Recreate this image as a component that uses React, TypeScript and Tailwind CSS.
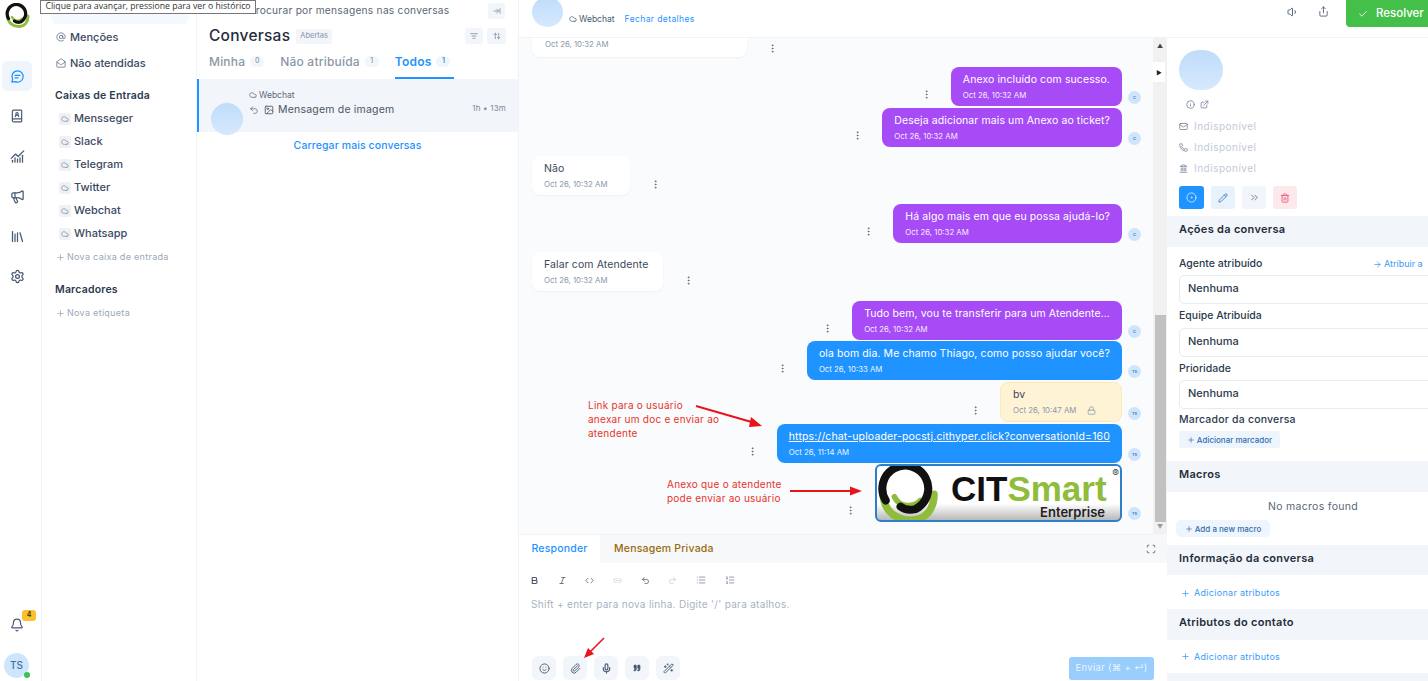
import {
  ArrowRight, ArrowUpDown, AtSign, Bell, Bold, BookUser, ChartNoAxesCombined, Check, ChevronsRight, CircleDot, Cloud,
  Code, EllipsisVertical, Image, Info, Italic, Landmark, Library, Link2, List, ListFilter, ListOrdered, Lock, Mail,
  MailOpen, Megaphone, Mic, Paperclip, Pencil, Phone, Plus, Quote, Redo2, Scan, Settings, Share,
  ExternalLink, Smile, Trash2, Undo2, Volume1, WandSparkles, ArrowRightToLine,
} from 'lucide-react';
import type { ReactNode } from 'react';

const inboxes = ['Mensseger', 'Slack', 'Telegram', 'Twitter', 'Webchat', 'Whatsapp'];

function Logo({ size }: { size: number }) {
  return (
    <svg width={size} height={size} viewBox="0 0 50 50" fill="none" className="shrink-0">
      <path d="M5 27C6 40 16 47 27 47C40 47 46 37 46 26" stroke="#8fbc3a" strokeWidth="6" strokeLinecap="round" />
      <path d="M14 28C18 37 29 37 35 31" stroke="#8fbc3a" strokeWidth="4.5" strokeLinecap="round" />
      <path d="M7 31A18.5 18.5 0 1 1 31 38C27 39 23 39 19 36" stroke="#111" strokeWidth="6.5" strokeLinecap="round" />
    </svg>
  );
}

function ChatIcon() {
  return (
    <svg width="15" height="15" viewBox="0 0 24 24" fill="none" stroke="#1f93ff" strokeWidth="2" strokeLinecap="round" strokeLinejoin="round">
      <path d="M12 3a9 9 0 1 1-3.6 17.2L3 21l1.2-4.6A9 9 0 0 1 12 3z" />
      <path d="M8 10h8M8 14h5" />
    </svg>
  );
}

function NavIcon({ children, active }: { children: ReactNode; active?: boolean }) {
  return (
    <div className={`flex h-[30px] w-[30px] items-center justify-center rounded-md text-[#4a5a72] ${active ? 'bg-[#eef5fd]' : ''}`}>
      {children}
    </div>
  );
}

function SectionHeader({ title, className }: { title: string; className: string }) {
  return (
    <div className={`flex shrink-0 items-center bg-[#f2f5f9] pb-[4px] pl-[12px] text-[11px] font-semibold tracking-[0.3px] text-[#1f2d3d] ${className}`}>
      {title}
    </div>
  );
}

function SelectBox() {
  return (
    <div className="flex h-[29px] w-[300px] items-center rounded-[5px] border border-[#e6ebf0] bg-white pb-[2px] pl-[8px] text-[11px] font-medium text-[#2c3a4d]">
      Nenhuma
    </div>
  );
}

function Kebab({ className }: { className: string }) {
  return <EllipsisVertical size={11} strokeWidth={2} className={`shrink-0 text-[#5b6b80] ${className}`} />;
}

function Mini({ label }: { label: string }) {
  return (
    <div className="mb-[2px] ml-[6px] flex h-[13px] w-[13px] shrink-0 items-center justify-center rounded-full bg-[#cfe5fb] text-[4px] font-semibold text-[#3b82c4]">
      {label}
    </div>
  );
}

function Outgoing({
  text, time, tone, mt, mini = 'C',
}: { text: string; time: string; tone: string; mt: string; mini?: string }) {
  return (
    <div className={`flex items-end justify-end ${mt}`}>
      <Kebab className="mb-[6px] mr-[19px]" />
      <div className={`flex h-[39px] flex-col justify-center rounded-[8px] px-[12px] text-white ${tone}`}>
        <p className="text-[10.5px] leading-[14px] tracking-[0.1px]">{text}</p>
        <p className="mt-[3px] text-[7.8px] leading-[11px] opacity-90">{time}</p>
      </div>
      <Mini label={mini} />
    </div>
  );
}

function Incoming({ text, mt, width }: { text: string; mt: string; width: string }) {
  return (
    <div className={`flex items-end ${mt}`}>
      <div className={`flex h-[39px] flex-col justify-center rounded-[8px] bg-white pl-[12px] shadow-[0_1px_2px_rgba(30,50,80,0.05)] ${width}`}>
        <p className="text-[10.5px] leading-[14px] tracking-[0.1px] text-[#3c4858]">{text}</p>
        <p className="mt-[3px] text-[7.8px] leading-[11px] text-[#8a97a8]">Oct 26, 10:32 AM</p>
      </div>
      <Kebab className="mb-[5px] ml-[20px]" />
    </div>
  );
}

function ComposerButton({ children }: { children: ReactNode }) {
  return <div className="flex h-[24px] w-[24px] items-center justify-center rounded-md bg-[#f2f5f9] text-[#4a5a72]">{children}</div>;
}

function Unavailable({ icon }: { icon: ReactNode }) {
  return (
    <div className="flex h-[21px] items-center gap-[6px] text-[10px] tracking-[0.5px] text-[#c2cad5]">
      {icon}Indisponível
    </div>
  );
}

export default function App() {
  return (
    <div className="relative flex h-[681px] w-[1428px] overflow-hidden bg-white font-['Inter',sans-serif]">
      {/* tooltip do navegador */}
      <div className="absolute left-[40px] top-0 z-20 flex h-[14px] w-[216px] items-center justify-center whitespace-nowrap border border-[#777] bg-white font-['Open_Sans',sans-serif] text-[8.7px] text-[#333]">
        Clique para avançar, pressione para ver o histórico
      </div>

      {/* nav */}
      <aside className="flex w-[42px] shrink-0 flex-col items-start border-r border-[#f1f3f6] pl-[2px] pt-[3px]">
        <div className="ml-[3px]"><Logo size={25} /></div>
        <div className="mt-[33px] flex flex-col items-center gap-[10px]">
          <NavIcon active><ChatIcon /></NavIcon>
          <NavIcon><BookUser size={14} /></NavIcon>
          <NavIcon><ChartNoAxesCombined size={15} /></NavIcon>
          <NavIcon><Megaphone size={15} /></NavIcon>
          <NavIcon><Library size={15} /></NavIcon>
          <NavIcon><Settings size={15} /></NavIcon>
        </div>
        <div className="relative mt-auto flex h-[30px] w-[30px] items-center justify-center text-[#4a5a72]">
          <Bell size={14} />
          <span className="absolute left-[20px] top-0 flex h-[11px] w-[14px] items-center justify-center rounded-[3px] bg-[#fbc02d] text-[7px] font-semibold text-[#3b2d00]">4</span>
        </div>
        <div className="relative mb-[3px] ml-[2px] mt-[13px] flex h-[25px] w-[25px] items-center justify-center rounded-full bg-[#cfe5fb] text-[10px] font-medium text-[#3f6fa8]">
          TS
          <span className="absolute bottom-0 right-[-1px] h-[6px] w-[6px] rounded-full bg-[#3fc04f]" />
        </div>
      </aside>

      {/* sidebar */}
      <nav className="flex w-[155px] shrink-0 flex-col border-r border-[#f1f3f6] pl-[9px] text-[11px] font-medium text-[#3c4a63]">
        <div className="h-[24px] w-[138px] rounded-b-md bg-[#f5f9ff]" />
        <div className="mt-[3px] flex h-[20px] items-center gap-[4px] pl-[5px]">
          <AtSign size={10} className="text-[#6b7a90]" />Menções
        </div>
        <div className="mt-[6px] flex h-[20px] items-center gap-[4px] pl-[5px]">
          <MailOpen size={10} className="text-[#6b7a90]" />Não atendidas
        </div>
        <div className="mt-[15px] h-[16px] pl-[4px] text-[10.5px] font-semibold leading-[16px] tracking-[0.2px] text-[#2c3a50]">Caixas de Entrada</div>
        <div className="mt-[3px] flex flex-col">
          {inboxes.map(name => (
            <div key={name} className="flex h-[23px] items-center gap-[3px] pl-[8px]">
              <span className="flex h-[12px] w-[12px] items-center justify-center rounded-[2px] bg-[#eef1f5]">
                <Cloud size={8} className="text-[#7d8a9c]" />
              </span>
              {name}
            </div>
          ))}
        </div>
        <div className="mt-[1px] flex h-[22px] items-center gap-[2px] pl-[5px] text-[9px] font-normal tracking-[0.3px] text-[#9aa7b8]">
          <Plus size={9} />Nova caixa de entrada
        </div>
        <div className="mt-[14px] h-[16px] pl-[4px] text-[10.5px] font-semibold leading-[16px] tracking-[0.2px] text-[#2c3a50]">Marcadores</div>
        <div className="mt-[7px] flex h-[16px] items-center gap-[2px] pl-[5px] text-[9px] font-normal tracking-[0.3px] text-[#9aa7b8]">
          <Plus size={9} />Nova etiqueta
        </div>
      </nav>

      {/* lista de conversas */}
      <section className="flex w-[322px] shrink-0 flex-col border-r border-[#f1f3f6]">
        <div className="flex h-[24px] items-start pl-[52px] pr-[13px] pt-[3px] text-[10.2px] leading-[14px] tracking-[0.25px] text-[#5a6778]">
          <span className="flex-1">Procurar por mensagens nas conversas</span>
          <span className="flex h-[16px] w-[17px] items-center justify-center rounded-[3px] bg-[#f2f5f9] text-[#6b7a90]">
            <ArrowRightToLine size={8} />
          </span>
        </div>
        <div className="flex h-[24px] items-center px-[12px]">
          <h1 className="text-[15.5px] font-medium tracking-[0.25px] text-[#1f2d3d]">Conversas</h1>
          <span className="ml-[6px] flex h-[15px] items-center rounded-[3px] bg-[#f2f5f9] px-[4px] text-[7.5px] text-[#8794a6]">Abertas</span>
          <span className="ml-auto flex h-[16px] w-[18px] items-center justify-center rounded-[3px] bg-[#f2f5f9] text-[#6b7a90]"><ListFilter size={8} /></span>
          <span className="ml-[4px] flex h-[16px] w-[19px] items-center justify-center rounded-[3px] bg-[#f2f5f9] text-[#6b7a90]"><ArrowUpDown size={8} /></span>
        </div>
        <div className="flex h-[31px] items-end pl-[12px] text-[12px] font-medium tracking-[0.2px] text-[#8a97a8]">
          <div className="flex h-[31px] items-start gap-[5px] pt-[5px]">Minha<span className="mt-[3px] flex h-[11px] w-[14px] items-center justify-center rounded-full bg-[#f2f5f9] text-[7px]">0</span></div>
          <div className="ml-[16px] flex h-[31px] items-start gap-[5px] pt-[5px]">Não atribuída<span className="mt-[3px] flex h-[11px] w-[14px] items-center justify-center rounded-full bg-[#f2f5f9] text-[7px]">1</span></div>
          <div className="ml-[16px] flex h-[31px] w-[59px] items-start gap-[5px] border-b-2 border-[#1f93ff] pt-[5px] font-semibold text-[#1f93ff]">Todos<span className="mt-[3px] flex h-[11px] w-[14px] items-center justify-center rounded-full bg-[#f2f5f9] text-[7px]">1</span></div>
        </div>
        <div className="flex h-[53px] border-l-2 border-[#1f93ff] bg-[#f2f5f9]">
          <div className="ml-[12px] mt-[24px] h-[32px] w-[32px] shrink-0 rounded-full bg-gradient-to-b from-[#bfdcfb] to-[#d6e9fd]" />
          <div className="ml-[6px] flex-1 pt-[10px]">
            <div className="flex items-center gap-[2px] text-[8.5px] text-[#5a6778]"><Cloud size={8} />Webchat</div>
            <div className="flex items-center text-[10.5px] leading-[16px] tracking-[0.2px] text-[#4a5668]">
              <Undo2 size={10} className="text-[#6b7a90]" />
              <Image size={10} className="ml-[5px] text-[#4a5668]" />
              <span className="ml-[4px]">Mensagem de imagem</span>
              <span className="mb-[3px] ml-auto mr-[12px] text-[8px] leading-[10px] text-[#7d8a9c]">1h • 13m</span>
            </div>
          </div>
        </div>
        <div className="mt-[6px] text-center text-[10.5px] font-medium leading-[16px] tracking-[0.1px] text-[#1f93ff]">Carregar mais conversas</div>
      </section>

      <div className="flex min-w-0 flex-1 flex-col">
        <header className="flex h-[38px] shrink-0 items-start border-b border-[#f1f3f6] pl-[13px]">
          <div className="mt-[-3px] h-[30px] w-[31px] rounded-full bg-gradient-to-b from-[#bfdcfb] to-[#d6e9fd]" />
          <span className="ml-[6px] mt-[13px] flex items-center gap-[2px] text-[8.5px] text-[#4a5668]"><Cloud size={8} />Webchat</span>
          <span className="ml-[10px] mt-[13px] text-[8.5px] tracking-[0.4px] text-[#1f93ff]">Fechar detalhes</span>
          <Volume1 size={12} className="ml-auto mt-[6px] text-[#5a6778]" />
          <Share size={11} className="ml-[19px] mt-[6px] text-[#5a6778]" />
          <div className="ml-[17px] flex h-[27px] w-[82px] items-center gap-[8px] rounded-bl-[4px] bg-[#44c04a] pl-[12px] text-[11.5px] font-medium text-white">
            <Check size={10} />Resolver
          </div>
        </header>

        <div className="flex min-h-0 flex-1">
          {/* chat */}
          <main className="relative flex w-[648px] shrink-0 flex-col">
            <div className="flex h-[496px] shrink-0 bg-[#f9fbfd]">
              <div className="relative flex-1 overflow-hidden pl-[13px] pr-[12px]">
                <div className="flex items-end">
                  <div className="flex h-[19px] w-[215px] items-start rounded-b-[8px] bg-white pl-[13px] text-[7.8px] leading-[12px] text-[#8a97a8] shadow-[0_1px_2px_rgba(30,50,80,0.05)]">
                    Oct 26, 10:32 AM
                  </div>
                  <Kebab className="mb-[3px] ml-[20px]" />
                </div>
                <Outgoing text="Anexo incluído com sucesso." time="Oct 26, 10:32 AM" tone="bg-[#a64bf6]" mt="mt-[10px]" />
                <Outgoing text="Deseja adicionar mais um Anexo ao ticket?" time="Oct 26, 10:32 AM" tone="bg-[#a64bf6]" mt="mt-[2px]" />
                <Incoming text="Não" mt="mt-[9px]" width="w-[98px]" />
                <Outgoing text="Há algo mais em que eu possa ajudá-lo?" time="Oct 26, 10:32 AM" tone="bg-[#a64bf6]" mt="mt-[9px]" />
                <Incoming text="Falar com Atendente" mt="mt-[9px]" width="w-[131px]" />
                <Outgoing text="Tudo bem, vou te transferir para um Atendente..." time="Oct 26, 10:32 AM" tone="bg-[#a64bf6]" mt="mt-[10px]" />
                <Outgoing text="ola bom dia. Me chamo Thiago, como posso ajudar você?" time="Oct 26, 10:33 AM" tone="bg-[#1f93ff]" mt="mt-[1px]" mini="TS" />
                <div className="mt-[2px] flex items-end justify-end">
                  <Kebab className="mb-[6px] mr-[19px]" />
                  <div className="flex h-[40px] w-[122px] flex-col justify-center rounded-[8px] border border-[#fde8b8] bg-[#fff3d6] pl-[12px]">
                    <p className="text-[10.5px] leading-[14px] text-[#3c4858]">bv</p>
                    <p className="mt-[3px] flex items-center text-[7.8px] leading-[11px] text-[#8a97a8]">Oct 26, 10:47 AM<Lock size={9} className="ml-[11px]" /></p>
                  </div>
                  <Mini label="TS" />
                </div>
                <div className="mt-[2px] flex items-end justify-end">
                  <Kebab className="mb-[6px] mr-[19px]" />
                  <div className="flex h-[39px] flex-col justify-center rounded-[8px] bg-[#1f93ff] px-[12px] text-white">
                    <p className="text-[10.5px] leading-[14px] tracking-[0.15px] underline">https://chat-uploader-pocstj.cithyper.click?conversationId=160</p>
                    <p className="mt-[3px] text-[7.8px] leading-[11px] opacity-90">Oct 26, 11:14 AM</p>
                  </div>
                  <Mini label="TS" />
                </div>
                <div className="mt-[1px] flex items-end justify-end">
                  <Kebab className="mb-[6px] mr-[19px]" />
                  <div className="relative flex h-[58px] w-[247px] items-center overflow-hidden rounded-[6px] border-2 border-[#2d7fc9] bg-gradient-to-b from-white from-70% to-[#b9b9b9]">
                    <Logo size={62} />
                    <div className="ml-[12px] mt-[-9px] font-['Liberation_Sans',sans-serif] text-[35px] font-bold leading-[28px]">
                      <span className="text-[#111]">CIT</span><span className="text-[#8fbc3a]">Smart</span>
                    </div>
                    <span className="absolute bottom-[1px] right-[15px] text-[13px] font-semibold leading-[14px] text-[#222]">Enterprise</span>
                    <span className="absolute right-[1px] top-[2px] text-[10px] leading-[10px] text-[#444]">®</span>
                  </div>
                  <Mini label="TS" />
                </div>

                {/* anotações */}
                <div className="absolute left-[69px] top-[360px] text-[10px] leading-[14px] tracking-[0.25px] text-[#e5352b]">
                  <p>Link para o usuário</p>
                  <p>anexar um doc e enviar ao</p>
                  <p>atendente</p>
                </div>
                <svg className="absolute left-[170px] top-[360px]" width="80" height="35" viewBox="0 0 80 35" fill="none">
                  <path d="M7 8 66 25" stroke="#e8141c" strokeWidth="2" />
                  <path d="M73 28 62 19 60 29z" fill="#e8141c" />
                </svg>
                <div className="absolute left-[148px] top-[439px] text-[10px] leading-[14px] tracking-[0.25px] text-[#e5352b]">
                  <p>Anexo que o atendente</p>
                  <p>pode enviar ao usuário</p>
                </div>
                <svg className="absolute left-[265px] top-[445px]" width="85" height="16" viewBox="0 0 85 16" fill="none">
                  <path d="M6 8H68" stroke="#e8141c" strokeWidth="2" />
                  <path d="M78 8 66 3.5V12.5z" fill="#e8141c" />
                </svg>
              </div>

              {/* scrollbar */}
              <div className="relative flex w-[14px] shrink-0 flex-col items-center bg-[#f1f1f1]">
                <span className="mt-[5px] text-[6px] leading-[6px] text-[#444]">▲</span>
                <div className="absolute left-0 top-[24px] flex h-[20px] w-[12px] items-center justify-center bg-white text-[6px] text-[#222]">▶</div>
                <div className="mt-[266px] h-[207px] w-[11px] bg-[#c1c1c1]" />
                <span className="mt-[2px] text-[6px] leading-[6px] text-[#999]">▼</span>
              </div>
            </div>

            {/* composer */}
            <div className="flex h-[29px] shrink-0 items-center border-t border-[#f1f3f6] bg-[#f7f8fa] text-[10.5px] font-medium tracking-[0.2px]">
              <div className="flex h-full w-[81px] items-center justify-center bg-white text-[#1f93ff]">Responder</div>
              <span className="ml-[14px] text-[#9a6a0c]">Mensagem Privada</span>
              <Scan size={10} className="ml-auto mr-[11px] text-[#4a5668]" />
            </div>
            <div className="flex min-h-0 flex-1 flex-col">
              <div className="mt-[11px] flex h-[12px] items-center gap-[18.7px] pl-[11px] text-[#4a5668]">
                <Bold size={9} strokeWidth={3} />
                <Italic size={9} />
                <Code size={9} />
                <Link2 size={9} className="text-[#c6ced8]" />
                <Undo2 size={9} />
                <Redo2 size={9} className="text-[#c6ced8]" />
                <List size={10} className="text-[#7d8a9c]" />
                <ListOrdered size={10} className="text-[#7d8a9c]" />
              </div>
              <p className="mt-[11px] pl-[12px] text-[10px] leading-[14px] tracking-[0.3px] text-[#a9b3c0]">Shift + enter para nova linha. Digite '/' para atalhos.</p>
              <div className="mt-auto flex items-end gap-[7px] px-[13px] pb-[1px]">
                <ComposerButton><Smile size={11} /></ComposerButton>
                <ComposerButton><Paperclip size={11} /></ComposerButton>
                <ComposerButton><Mic size={11} strokeWidth={2.5} /></ComposerButton>
                <ComposerButton><Quote size={8} fill="currentColor" /></ComposerButton>
                <ComposerButton><WandSparkles size={11} /></ComposerButton>
                <div className="ml-auto flex h-[23px] w-[85px] items-center justify-center rounded-[3px] bg-[#98cdfc] text-[9.5px] tracking-[0.3px] text-[#e8f4ff]">Enviar (⌘ + ↵)</div>
              </div>
            </div>
            <svg className="absolute left-[60px] top-[596px]" width="30" height="28" viewBox="0 0 30 28" fill="none">
              <path d="M25 4 11 18" stroke="#e8141c" strokeWidth="1.6" />
              <path d="M5 24 9 14 15 20z" fill="#e8141c" />
            </svg>
          </main>

          {/* detalhes */}
          <aside className="flex min-w-0 flex-1 flex-col overflow-hidden">
            <div className="pl-[12px] pt-[12px]">
              <div className="h-[40px] w-[44px] rounded-full bg-gradient-to-b from-[#bfdcfb] to-[#d6e9fd]" />
              <div className="ml-[7px] mt-[9px] flex h-[11px] items-center gap-[5px] text-[#6b7a90]"><Info size={9} /><ExternalLink size={9} /></div>
              <div className="mt-[6px]">
                <Unavailable icon={<Mail size={9} className="text-[#6b7a90]" />} />
                <Unavailable icon={<Phone size={9} className="text-[#6b7a90]" />} />
                <Unavailable icon={<Landmark size={9} className="text-[#6b7a90]" />} />
              </div>
              <div className="mt-[7px] flex gap-[7px]">
                <span className="flex h-[23px] w-[25px] items-center justify-center rounded-[3px] bg-[#1f93ff] text-[#cde6ff]"><CircleDot size={11} /></span>
                <span className="flex h-[23px] w-[24px] items-center justify-center rounded-[3px] bg-[#e8f2fd] text-[#3f78b8]"><Pencil size={10} /></span>
                <span className="flex h-[23px] w-[24px] items-center justify-center rounded-[3px] bg-[#f2f5f9] text-[#6b7a90]"><ChevronsRight size={11} /></span>
                <span className="flex h-[23px] w-[24px] items-center justify-center rounded-[3px] bg-[#fde8ec] text-[#e5566f]"><Trash2 size={10} /></span>
              </div>
            </div>
            <SectionHeader title="Ações da conversa" className="mt-[7px] h-[31px]" />
            <div className="flex items-center pl-[12px] pt-[10px] text-[10.5px] font-medium leading-[14px] text-[#2c3a4d]">
              <span className="w-[194px]">Agente atribuído</span>
              <span className="flex items-center gap-[2px] whitespace-nowrap text-[9px] font-normal text-[#3b9cf5]"><ArrowRight size={9} />Atribuir a</span>
            </div>
            <div className="ml-[12px] mt-[4px]"><SelectBox /></div>
            <div className="ml-[12px] mt-[5px] text-[10.5px] font-medium leading-[14px] text-[#2c3a4d]">Equipe Atribuída</div>
            <div className="ml-[12px] mt-[5px]"><SelectBox /></div>
            <div className="ml-[12px] mt-[5px] text-[10.5px] font-medium leading-[14px] text-[#2c3a4d]">Prioridade</div>
            <div className="ml-[12px] mt-[4px]"><SelectBox /></div>
            <div className="ml-[12px] mt-[4px] text-[10.5px] font-medium leading-[14px] tracking-[0.2px] text-[#2c3a4d]">Marcador da conversa</div>
            <div className="ml-[12px] mt-[4px] flex h-[17px] w-[101px] shrink-0 items-center justify-center gap-[2px] rounded-[3px] bg-[#eef5fd] text-[8px] font-medium text-[#2f6fb0]"><Plus size={8} />Adicionar marcador</div>
            <SectionHeader title="Macros" className="mt-[13px] h-[31px]" />
            <div className="mt-[8px] h-[14px] w-[292px] shrink-0 text-center text-[10.5px] leading-[14px] tracking-[0.3px] text-[#5a6778]">No macros found</div>
            <div className="ml-[9px] mt-[6px] flex h-[17px] w-[94px] shrink-0 items-center justify-center gap-[2px] rounded-[5px] bg-[#eef5fd] text-[8px] font-medium text-[#2f6fb0]"><Plus size={8} />Add a new macro</div>
            <SectionHeader title="Informação da conversa" className="mt-[8px] h-[30px]" />
            <div className="flex h-[34px] shrink-0 items-center gap-[4px] pl-[14px] pt-[2px] text-[9px] tracking-[0.3px] text-[#3b9cf5]"><Plus size={9} />Adicionar atributos</div>
            <SectionHeader title="Atributos do contato" className="h-[31px]" />
            <div className="flex h-[33px] shrink-0 items-center gap-[4px] pl-[14px] text-[9px] tracking-[0.3px] text-[#3b9cf5]"><Plus size={9} />Adicionar atributos</div>
            <div className="flex-1 bg-[#f2f5f9]" />
          </aside>
        </div>
      </div>
    </div>
  );
}
